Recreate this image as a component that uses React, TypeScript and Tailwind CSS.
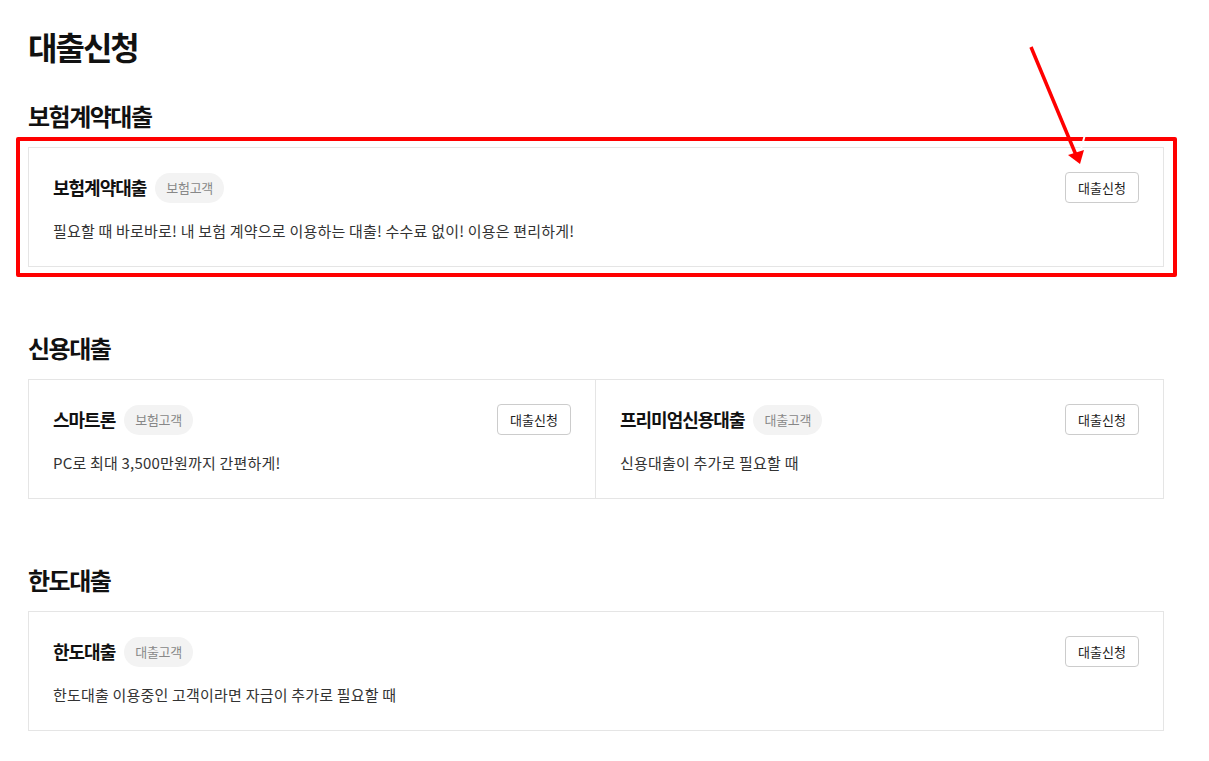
import React from "react";

const font = { fontFamily: '"Noto Sans CJK KR", "Noto Sans", sans-serif' };

function Item({ title, badge, desc }: { title: string; badge: string; desc: string }) {
  return (
    <div className="px-[24px] pt-[24px] pb-[24px]">
      <div className="flex items-center justify-between h-[31px]">
        <div className="flex items-center gap-[9px]">
          <span className="text-[18px] font-bold text-[#111] tracking-[-1px]">{title}</span>
          <span className="h-[30px] px-[11px] rounded-full bg-[#f3f3f3] text-[13px] text-[#888] flex items-center tracking-[-0.3px]">{badge}</span>
        </div>
        <button className="h-[31px] w-[74px] border border-[#cccccc] rounded-[4px] bg-white text-[13px] text-[#222] flex items-center justify-center">
          대출신청
        </button>
      </div>
      <p className="mt-[17px] text-[15px] leading-[22px] text-[#333] tracking-[0.2px]">{desc}</p>
    </div>
  );
}

export default function App() {
  return (
    <div className="relative bg-white min-h-[761px] w-[1209px]" style={font}>
      <div className="pl-[28px] pt-[25px] w-[1164px]">
        <h1 className="text-[32px] font-bold leading-[42px] text-[#111] tracking-[-2px]">대출신청</h1>

        <h2 className="mt-[33px] text-[24px] font-bold leading-[32px] text-[#111] tracking-[-1.5px]">보험계약대출</h2>
        <div className="relative mt-[15px]">
          <div className="border border-[#e5e5e5]">
            <Item
              title="보험계약대출"
              badge="보험고객"
              desc="필요할 때 바로바로! 내 보험 계약으로 이용하는 대출! 수수료 없이! 이용은 편리하게!"
            />
          </div>
          <div className="absolute -left-[12px] -top-[10px] -right-[13px] -bottom-[10px] border-4 border-[#ff0000] rounded-[2px] pointer-events-none" />
        </div>

        <h2 className="mt-[65px] text-[24px] font-bold leading-[32px] text-[#111] tracking-[-1.5px]">신용대출</h2>
        <div className="mt-[15px] border border-[#e5e5e5] grid grid-cols-[566px_1fr]">
          <Item title="스마트론" badge="보험고객" desc="PC로 최대 3,500만원까지 간편하게!" />
          <div className="border-l border-[#e5e5e5]">
            <Item title="프리미엄신용대출" badge="대출고객" desc="신용대출이 추가로 필요할 때" />
          </div>
        </div>

        <h2 className="mt-[65px] text-[24px] font-bold leading-[32px] text-[#111] tracking-[-1.5px]">한도대출</h2>
        <div className="mt-[15px] border border-[#e5e5e5]">
          <Item title="한도대출" badge="대출고객" desc="한도대출 이용중인 고객이라면 자금이 추가로 필요할 때" />
        </div>
      </div>

      <svg className="absolute left-0 top-0 pointer-events-none" width="1209" height="300" viewBox="0 0 1209 300">
        <line x1="1086" y1="131" x2="1081" y2="149" stroke="#ffffff" strokeWidth="2" />
        <line x1="1031" y1="47" x2="1076" y2="155" stroke="#ff0000" strokeWidth="3.5" />
        <polygon points="1080,164 1068,155 1084,150" fill="#ff0000" />
      </svg>
    </div>
  );
}
